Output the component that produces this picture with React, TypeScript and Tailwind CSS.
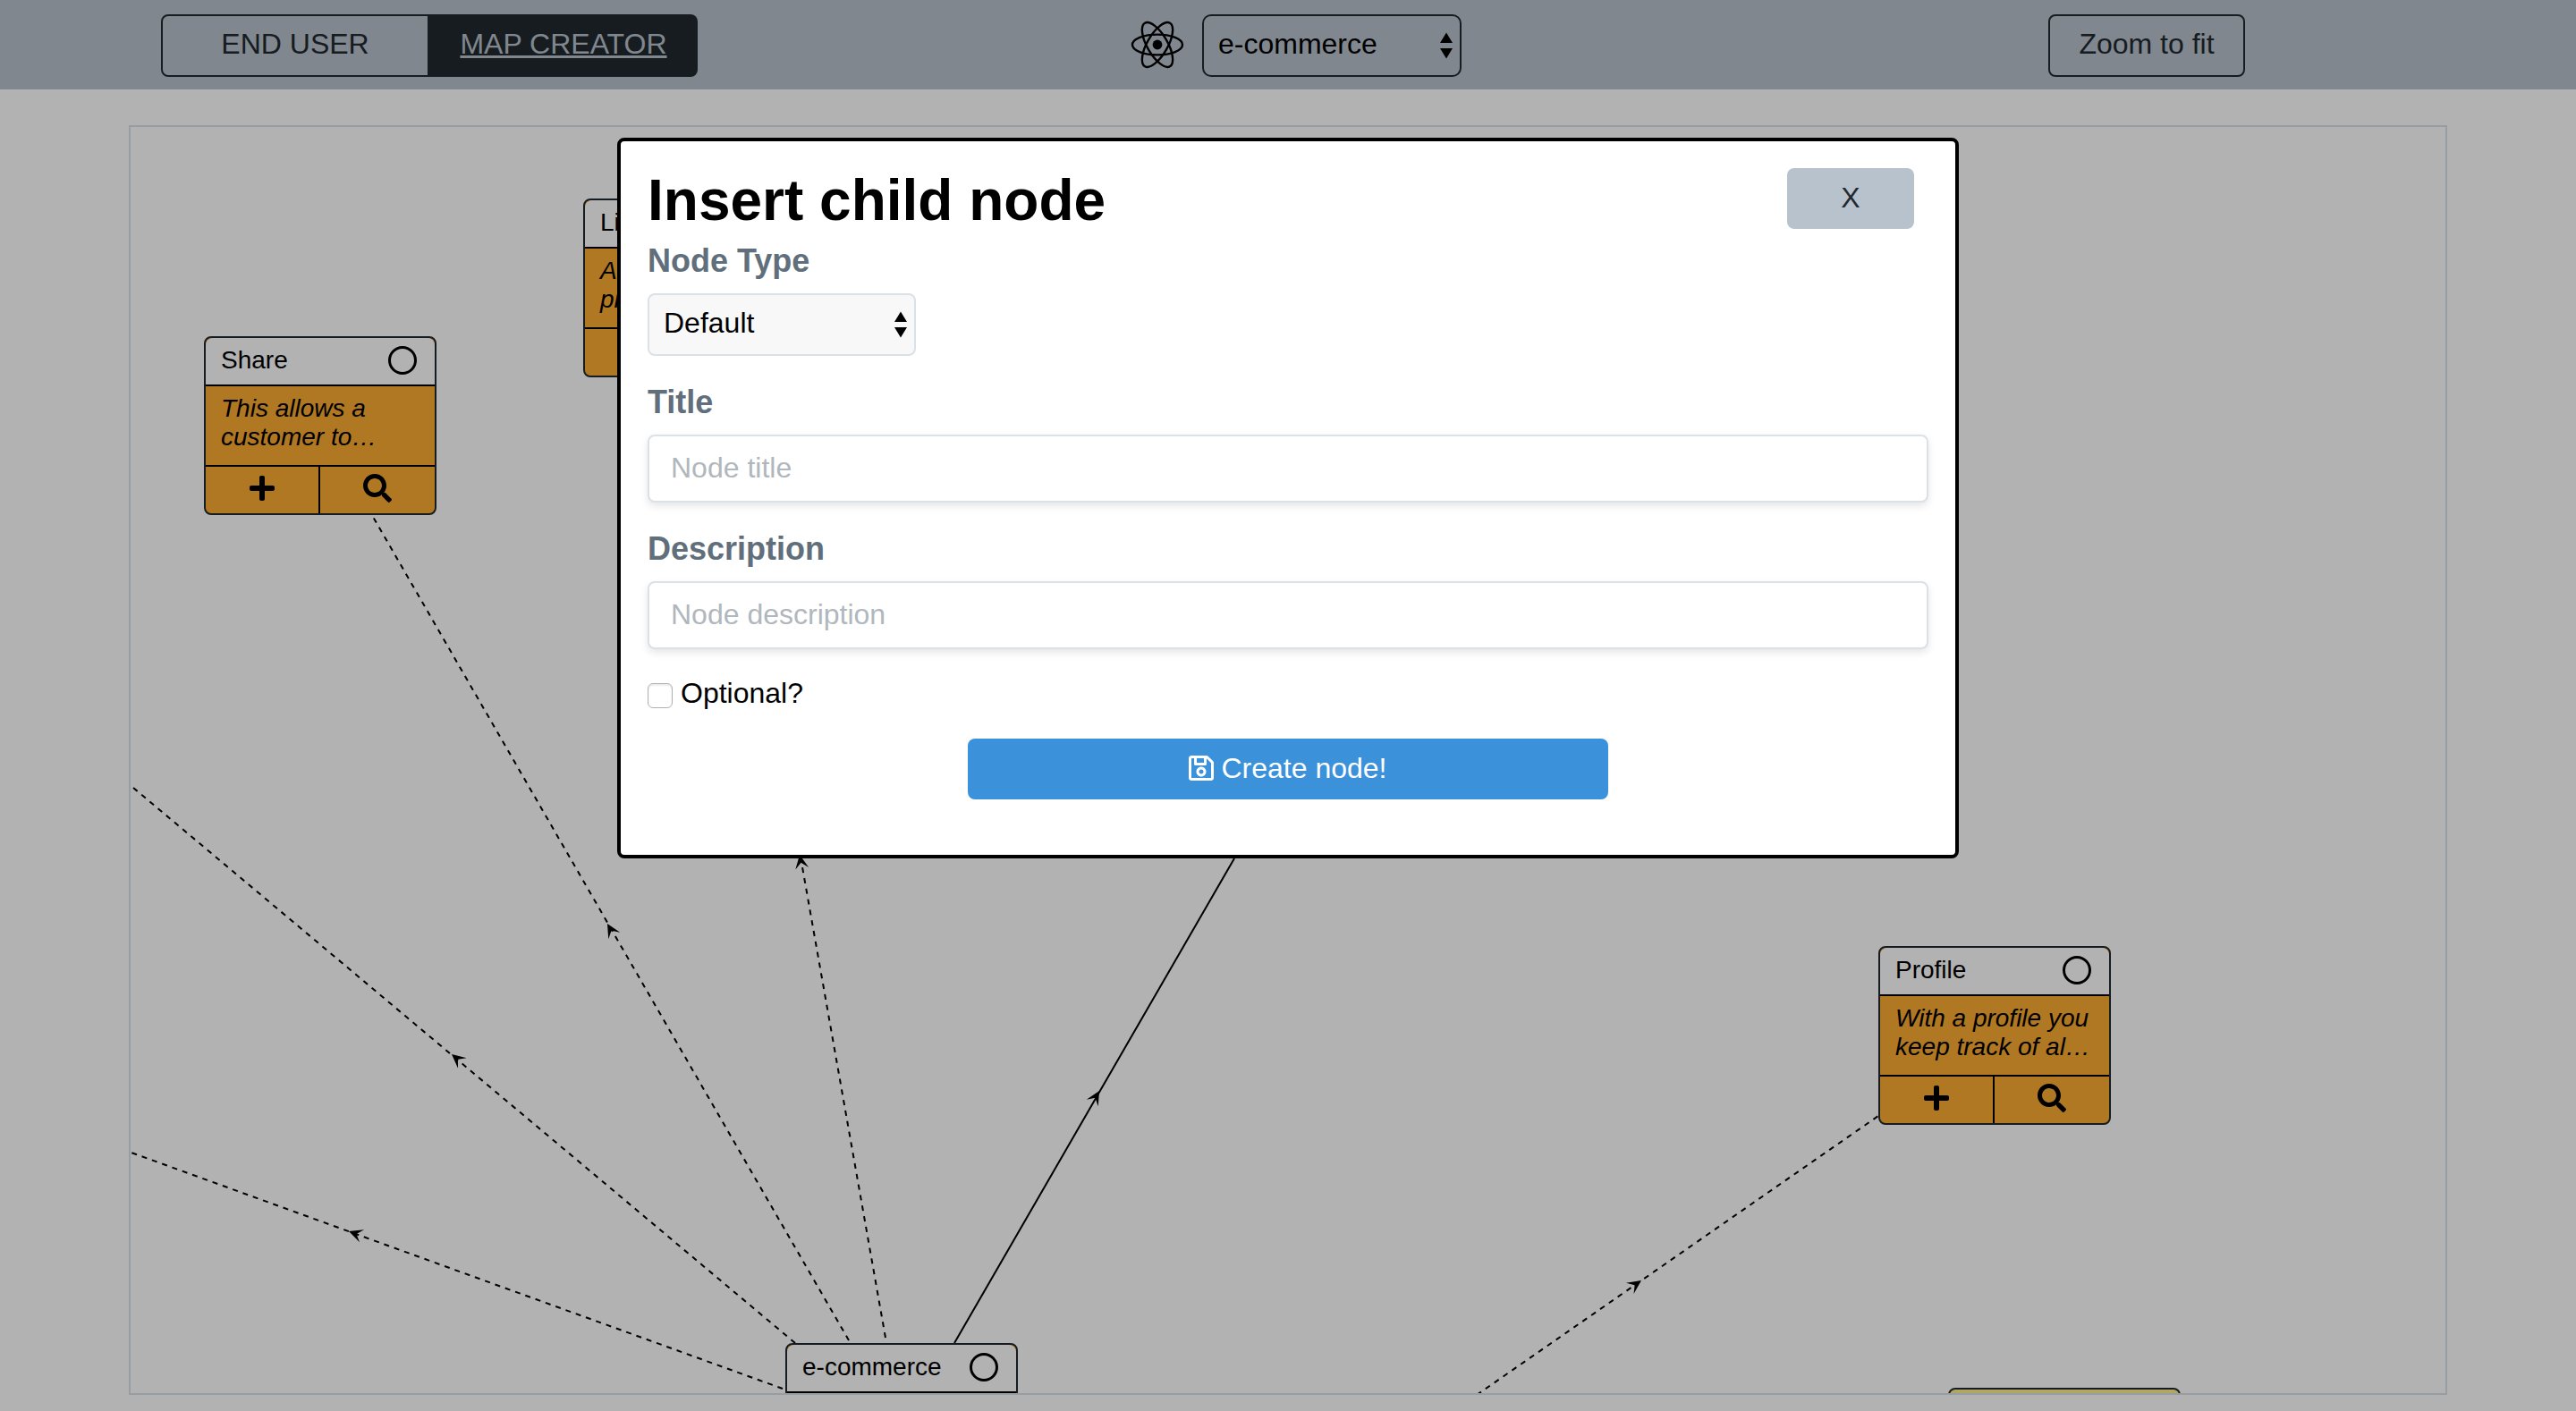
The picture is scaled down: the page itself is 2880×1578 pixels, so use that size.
import React from "react";
import { FaPlus, FaRegSave, FaSearch } from "react-icons/fa";

type MapNode = {
  title: string;
  description: string;
  position: string;
  yellow?: boolean;
};

type Edge = {
  from: [number, number];
  to: [number, number];
  arrow: [number, number];
  solid?: boolean;
};

const nodes: MapNode[] = [
  { title: "Share", description: "This allows a customer to…", position: "left-[82px] top-[234px]" },
  { title: "List", description: "A list of your products…", position: "left-[506px] top-[80px]" },
  { title: "Profile", description: "With a profile you keep track of al…", position: "left-[1954px] top-[916px]" },
  { title: "e-commerce", description: "", position: "left-[732px] top-[1360px]" },
  { title: "", description: "", position: "left-[2032px] top-[1410px]", yellow: true },
];

const edges: Edge[] = [
  { from: [743, 1360], to: [3, 739], arrow: [359, 1037] },
  { from: [729, 1411], to: [-2, 1146], arrow: [244, 1235] },
  { from: [803, 1357], to: [271, 436], arrow: [533, 891] },
  { from: [844, 1354], to: [694, 505], arrow: [748, 814] },
  { from: [921, 1360], to: [1234, 818], arrow: [1083, 1078], solid: true },
  { from: [1505, 1418], to: [1954, 1106], arrow: [1689, 1290] },
];

function ReactLogo() {
  return (
    <svg viewBox="-32 -32 64 64" className="size-16" fill="none" stroke="black" strokeWidth="2.4" aria-hidden="true">
      <ellipse rx="28" ry="11.4" />
      <ellipse rx="28" ry="11.4" transform="rotate(60)" />
      <ellipse rx="28" ry="11.4" transform="rotate(120)" />
      <circle r="5.4" fill="black" stroke="none" />
    </svg>
  );
}

function UpDownArrows() {
  return (
    <svg
      viewBox="0 0 14 30"
      className="pointer-events-none absolute right-2.5 top-5 h-[30px] w-3.5"
      aria-hidden="true"
    >
      <path d="M7 0.5 L14 12 H0 Z M0 18 H14 L7 29.5 Z" fill="black" />
    </svg>
  );
}

function EdgeLayer() {
  return (
    <svg className="absolute inset-0 h-full w-full" aria-hidden="true">
      {edges.map((e, i) => {
        const angle = (Math.atan2(e.to[1] - e.from[1], e.to[0] - e.from[0]) * 180) / Math.PI;
        return (
          <g key={i}>
            <line
              x1={e.from[0]}
              y1={e.from[1]}
              x2={e.to[0]}
              y2={e.to[1]}
              stroke="black"
              strokeWidth="2"
              strokeDasharray={e.solid ? undefined : "6 6"}
            />
            <path
              d="M0 0 L-15.5 7.5 L-9 0 L-15.5 -7.5 Z"
              transform={`translate(${e.arrow[0]} ${e.arrow[1]}) rotate(${angle})`}
              fill="black"
            />
          </g>
        );
      })}
    </svg>
  );
}

function NodeCard({ node }: { node: MapNode }) {
  return (
    <article
      className={`absolute flex h-[200px] w-[260px] flex-col overflow-hidden rounded-lg border-2 border-[#22292f] text-[28px] leading-8 ${node.position} ${node.yellow ? "bg-[#fdf090]" : "bg-[#fcad32]"}`}
    >
      <header
        className={`flex h-[54px] items-center justify-between border-b-2 border-black pb-0.5 pl-[17px] pr-5 ${node.yellow ? "" : "rounded-t-lg bg-white"}`}
      >
        <h2>{node.title}</h2>
        <span className="size-8 rounded-full border-[3px] border-black" />
      </header>
      <p className="h-22 pl-[17px] pr-3.5 pt-[9px] italic">{node.description}</p>
      <div className="grid flex-1 grid-cols-2 border-t-2 border-black">
        <button type="button" aria-label="Add child" className="flex items-center justify-center border-r-2 border-black pb-1">
          <FaPlus className="h-8 w-7" />
        </button>
        <button type="button" aria-label="Inspect" className="flex items-center justify-center pb-1">
          <FaSearch className="size-8" />
        </button>
      </div>
    </article>
  );
}

function TextField({ id, label, placeholder }: { id: string; label: string; placeholder: string }) {
  return (
    <div className="mt-[30px]">
      <label htmlFor={id} className="mb-3.5 block text-[36px] font-bold leading-11 text-[#606f7b]">
        {label}
      </label>
      <input
        id={id}
        type="text"
        placeholder={placeholder}
        className="block h-19 w-full rounded-lg border-2 border-[#dae1e7] bg-white px-6 pb-0.5 shadow-[0_4px_8px_rgba(0,0,0,0.1)] placeholder:text-[#b0b7bd]"
      />
    </div>
  );
}

function InsertNodeModal() {
  return (
    <div className="fixed inset-0 flex items-start justify-center bg-black/30 pt-[154px]">
      <section
        role="dialog"
        aria-labelledby="modal-title"
        className="w-[1500px] max-w-full rounded-lg border-4 border-black bg-white px-[30px] pb-[62px] pt-[30px]"
      >
        <div className="flex items-start justify-between">
          <h1 id="modal-title" className="text-[64px] font-bold leading-[72px]">
            Insert child node
          </h1>
          <button type="button" className="mr-4 h-17 w-[142px] rounded-lg bg-[#b8c2cc] pb-0.5 text-[#22292f]">
            X
          </button>
        </div>
        <form>
          <div className="mt-2.5">
            <label htmlFor="node-type" className="mb-3.5 block text-[36px] font-bold leading-11 text-[#606f7b]">
              Node Type
            </label>
            <div className="relative w-[300px]">
              <select
                id="node-type"
                className="block h-[70px] w-full appearance-none rounded-lg border-2 border-[#dae1e7] bg-[#f8f8f8] pb-1 pl-4"
              >
                <option>Default</option>
              </select>
              <UpDownArrows />
            </div>
          </div>
          <TextField id="node-title" label="Title" placeholder="Node title" />
          <TextField id="node-description" label="Description" placeholder="Node description" />
          <div className="mt-7 flex items-center gap-[9px] leading-[42px]">
            <input
              id="optional"
              type="checkbox"
              className="mb-1 size-7 appearance-none self-end rounded-md border border-[#b0b0b0] bg-white shadow-[inset_0_2px_2px_rgba(0,0,0,0.08)]"
            />
            <label htmlFor="optional">Optional?</label>
          </div>
          <button
            type="button"
            className="mx-auto mt-[30px] flex h-17 w-1/2 items-center justify-center gap-2 rounded-lg bg-[#3b91da] pb-0.5 text-white"
          >
            <FaRegSave className="h-8 w-7" />
            Create node!
          </button>
        </form>
      </section>
    </div>
  );
}

export default function App() {
  return (
    <div className="min-h-screen bg-white font-['Liberation_Sans',Arial,sans-serif] text-[32px] leading-10 text-black">
      <header className="grid h-[100px] grid-cols-3 bg-[#b8c2cc] pt-4">
        <div className="flex justify-center">
          <nav className="grid h-[70px] w-[600px] grid-cols-2">
            <button type="button" className="rounded-l-lg border-2 border-[#22292f] pb-1 text-[#22292f]">
              END USER
            </button>
            <button type="button" className="rounded-r-lg bg-[#22292f] pb-1 text-[#b8c2cc] underline">
              MAP CREATOR
            </button>
          </nav>
        </div>
        <div className="flex justify-center gap-[18px] pl-4">
          <div className="mt-0.5">
            <ReactLogo />
          </div>
          <div className="relative h-[70px] w-[290px]">
            <select
              aria-label="Map"
              className="block h-full w-full appearance-none rounded-[10px] border-2 border-[#22292f] bg-transparent pb-1 pl-4"
            >
              <option>e-commerce</option>
            </select>
            <UpDownArrows />
          </div>
        </div>
        <div className="flex justify-center">
          <button type="button" className="h-[70px] w-[220px] rounded-lg border-2 border-[#22292f] pb-1 text-[#22292f]">
            Zoom to fit
          </button>
        </div>
      </header>
      <main className="relative mx-[5%] mt-10 h-[90vh] overflow-hidden border-2 border-[#dae1e7]">
        <EdgeLayer />
        {nodes.map((node) => (
          <NodeCard key={node.position} node={node} />
        ))}
      </main>
      <InsertNodeModal />
    </div>
  );
}
